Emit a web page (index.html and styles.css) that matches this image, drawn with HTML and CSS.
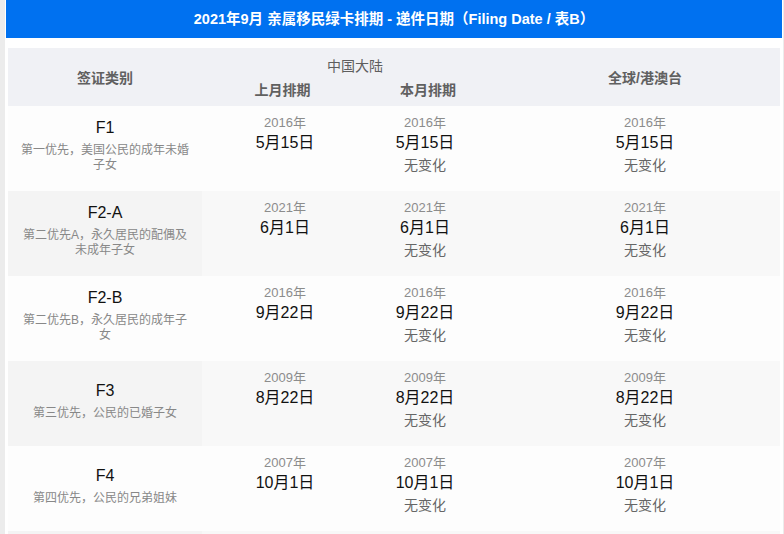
FILE: index.html
```html
<!DOCTYPE html>
<html lang="zh-CN">
<head>
<meta charset="utf-8">
<title>2021年9月 亲属移民绿卡排期</title>
<link rel="stylesheet" href="styles.css">
</head>
<body>
<div class="page">
  <div class="titlebar">2021年9月 亲属移民绿卡排期 - 递件日期（Filing Date / 表B）</div>
  <div class="table">
    <div class="head">
      <div class="h-cat">签证类别</div>
      <div class="h-group">中国大陆</div>
      <div class="h-sub h-last">上月排期</div>
      <div class="h-sub h-this">本月排期</div>
      <div class="h-world">全球/港澳台</div>
    </div>

    <div class="row">
      <div class="cat"><div class="code">F1</div><div class="desc">第一优先，美国公民的成年未婚子女</div></div>
      <div class="date c2"><div class="yr">2016年</div><div class="md">5月15日</div></div>
      <div class="date c3"><div class="yr">2016年</div><div class="md">5月15日</div><div class="chg">无变化</div></div>
      <div class="date c4"><div class="yr">2016年</div><div class="md">5月15日</div><div class="chg">无变化</div></div>
    </div>

    <div class="row alt">
      <div class="cat"><div class="code">F2-A</div><div class="desc">第二优先A，永久居民的配偶及未成年子女</div></div>
      <div class="date c2"><div class="yr">2021年</div><div class="md">6月1日</div></div>
      <div class="date c3"><div class="yr">2021年</div><div class="md">6月1日</div><div class="chg">无变化</div></div>
      <div class="date c4"><div class="yr">2021年</div><div class="md">6月1日</div><div class="chg">无变化</div></div>
    </div>

    <div class="row">
      <div class="cat"><div class="code">F2-B</div><div class="desc">第二优先B，永久居民的成年子女</div></div>
      <div class="date c2"><div class="yr">2016年</div><div class="md">9月22日</div></div>
      <div class="date c3"><div class="yr">2016年</div><div class="md">9月22日</div><div class="chg">无变化</div></div>
      <div class="date c4"><div class="yr">2016年</div><div class="md">9月22日</div><div class="chg">无变化</div></div>
    </div>

    <div class="row alt">
      <div class="cat"><div class="code">F3</div><div class="desc">第三优先，公民的已婚子女</div></div>
      <div class="date c2"><div class="yr">2009年</div><div class="md">8月22日</div></div>
      <div class="date c3"><div class="yr">2009年</div><div class="md">8月22日</div><div class="chg">无变化</div></div>
      <div class="date c4"><div class="yr">2009年</div><div class="md">8月22日</div><div class="chg">无变化</div></div>
    </div>

    <div class="row">
      <div class="cat"><div class="code">F4</div><div class="desc">第四优先，公民的兄弟姐妹</div></div>
      <div class="date c2"><div class="yr">2007年</div><div class="md">10月1日</div></div>
      <div class="date c3"><div class="yr">2007年</div><div class="md">10月1日</div><div class="chg">无变化</div></div>
      <div class="date c4"><div class="yr">2007年</div><div class="md">10月1日</div><div class="chg">无变化</div></div>
    </div>

    <div class="row alt">
      <div class="cat"></div>
      <div class="date c2"></div>
      <div class="date c3"></div>
      <div class="date c4"></div>
    </div>
  </div>
</div>
</body>
</html>
```

FILE: styles.css
```css
html, body {
  margin: 0;
  padding: 0;
}
body {
  background: #ececec;
  font-family: "Liberation Sans", "Noto Sans CJK SC", sans-serif;
  height: 534px;
  overflow: hidden;
}
.page {
  margin: 0 1px 0 5px;
  width: 776px;
  padding: 0 1px;
  background: #ffffff;
  height: 534px;
  overflow: hidden;
}
.titlebar {
  height: 38px;
  background: #0071f0;
  color: #ffffff;
  font-size: 14.5px;
  font-weight: 700;
  line-height: 38px;
  text-align: center;
}
.table {
  margin: 10px 2px 0;
}
.head {
  display: grid;
  grid-template-columns: 194px 166px 114px 1fr;
  grid-template-rows: 29px 29px;
  height: 58px;
  background: #f0f1f5;
  color: #606060;
  font-size: 14px;
  font-weight: 700;
}
.h-cat {
  grid-column: 1;
  grid-row: 1 / span 2;
  display: flex;
  align-items: center;
  justify-content: center;
  padding-bottom: 1px;
}
.h-group {
  grid-column: 2 / span 2;
  grid-row: 1;
  display: flex;
  align-items: flex-end;
  justify-content: center;
  padding-left: 26px;
  padding-bottom: 2px;
  font-weight: 400;
  color: #5e5e5e;
}
.h-sub {
  grid-row: 2;
  display: flex;
  align-items: flex-start;
  justify-content: center;
  padding-top: 2px;
}
.h-last {
  grid-column: 2;
  padding-right: 5px;
}
.h-this {
  grid-column: 3;
  padding-left: 6px;
}
.h-world {
  grid-column: 4;
  grid-row: 1 / span 2;
  display: flex;
  align-items: center;
  justify-content: center;
  padding-left: 28px;
  padding-bottom: 1px;
}
.row {
  display: grid;
  grid-template-columns: 194px 166px 114px 1fr;
  height: 85px;
  background: #fdfdfd;
}
.row.alt {
  background: #f8f8f8;
}
.row.alt .cat {
  background: #f4f4f4;
}
.cat {
  display: flex;
  flex-direction: column;
  justify-content: center;
  align-items: center;
  text-align: center;
  padding: 0 12px 7px;
}
.code {
  font-size: 16px;
  line-height: 22px;
  color: #111;
  margin-bottom: 4px;
}
.desc {
  font-size: 12px;
  line-height: 15px;
  color: #888;
}
.date {
  display: flex;
  flex-direction: column;
  align-items: center;
  padding-top: 8px;
  text-align: center;
}
.c4 {
  padding-left: 28px;
}
.yr {
  font-size: 13px;
  line-height: 18px;
  color: #8c8c8c;
}
.md {
  font-size: 16px;
  line-height: 22px;
  color: #111;
}
.chg {
  font-size: 14px;
  line-height: 22px;
  color: #666;
}
```
